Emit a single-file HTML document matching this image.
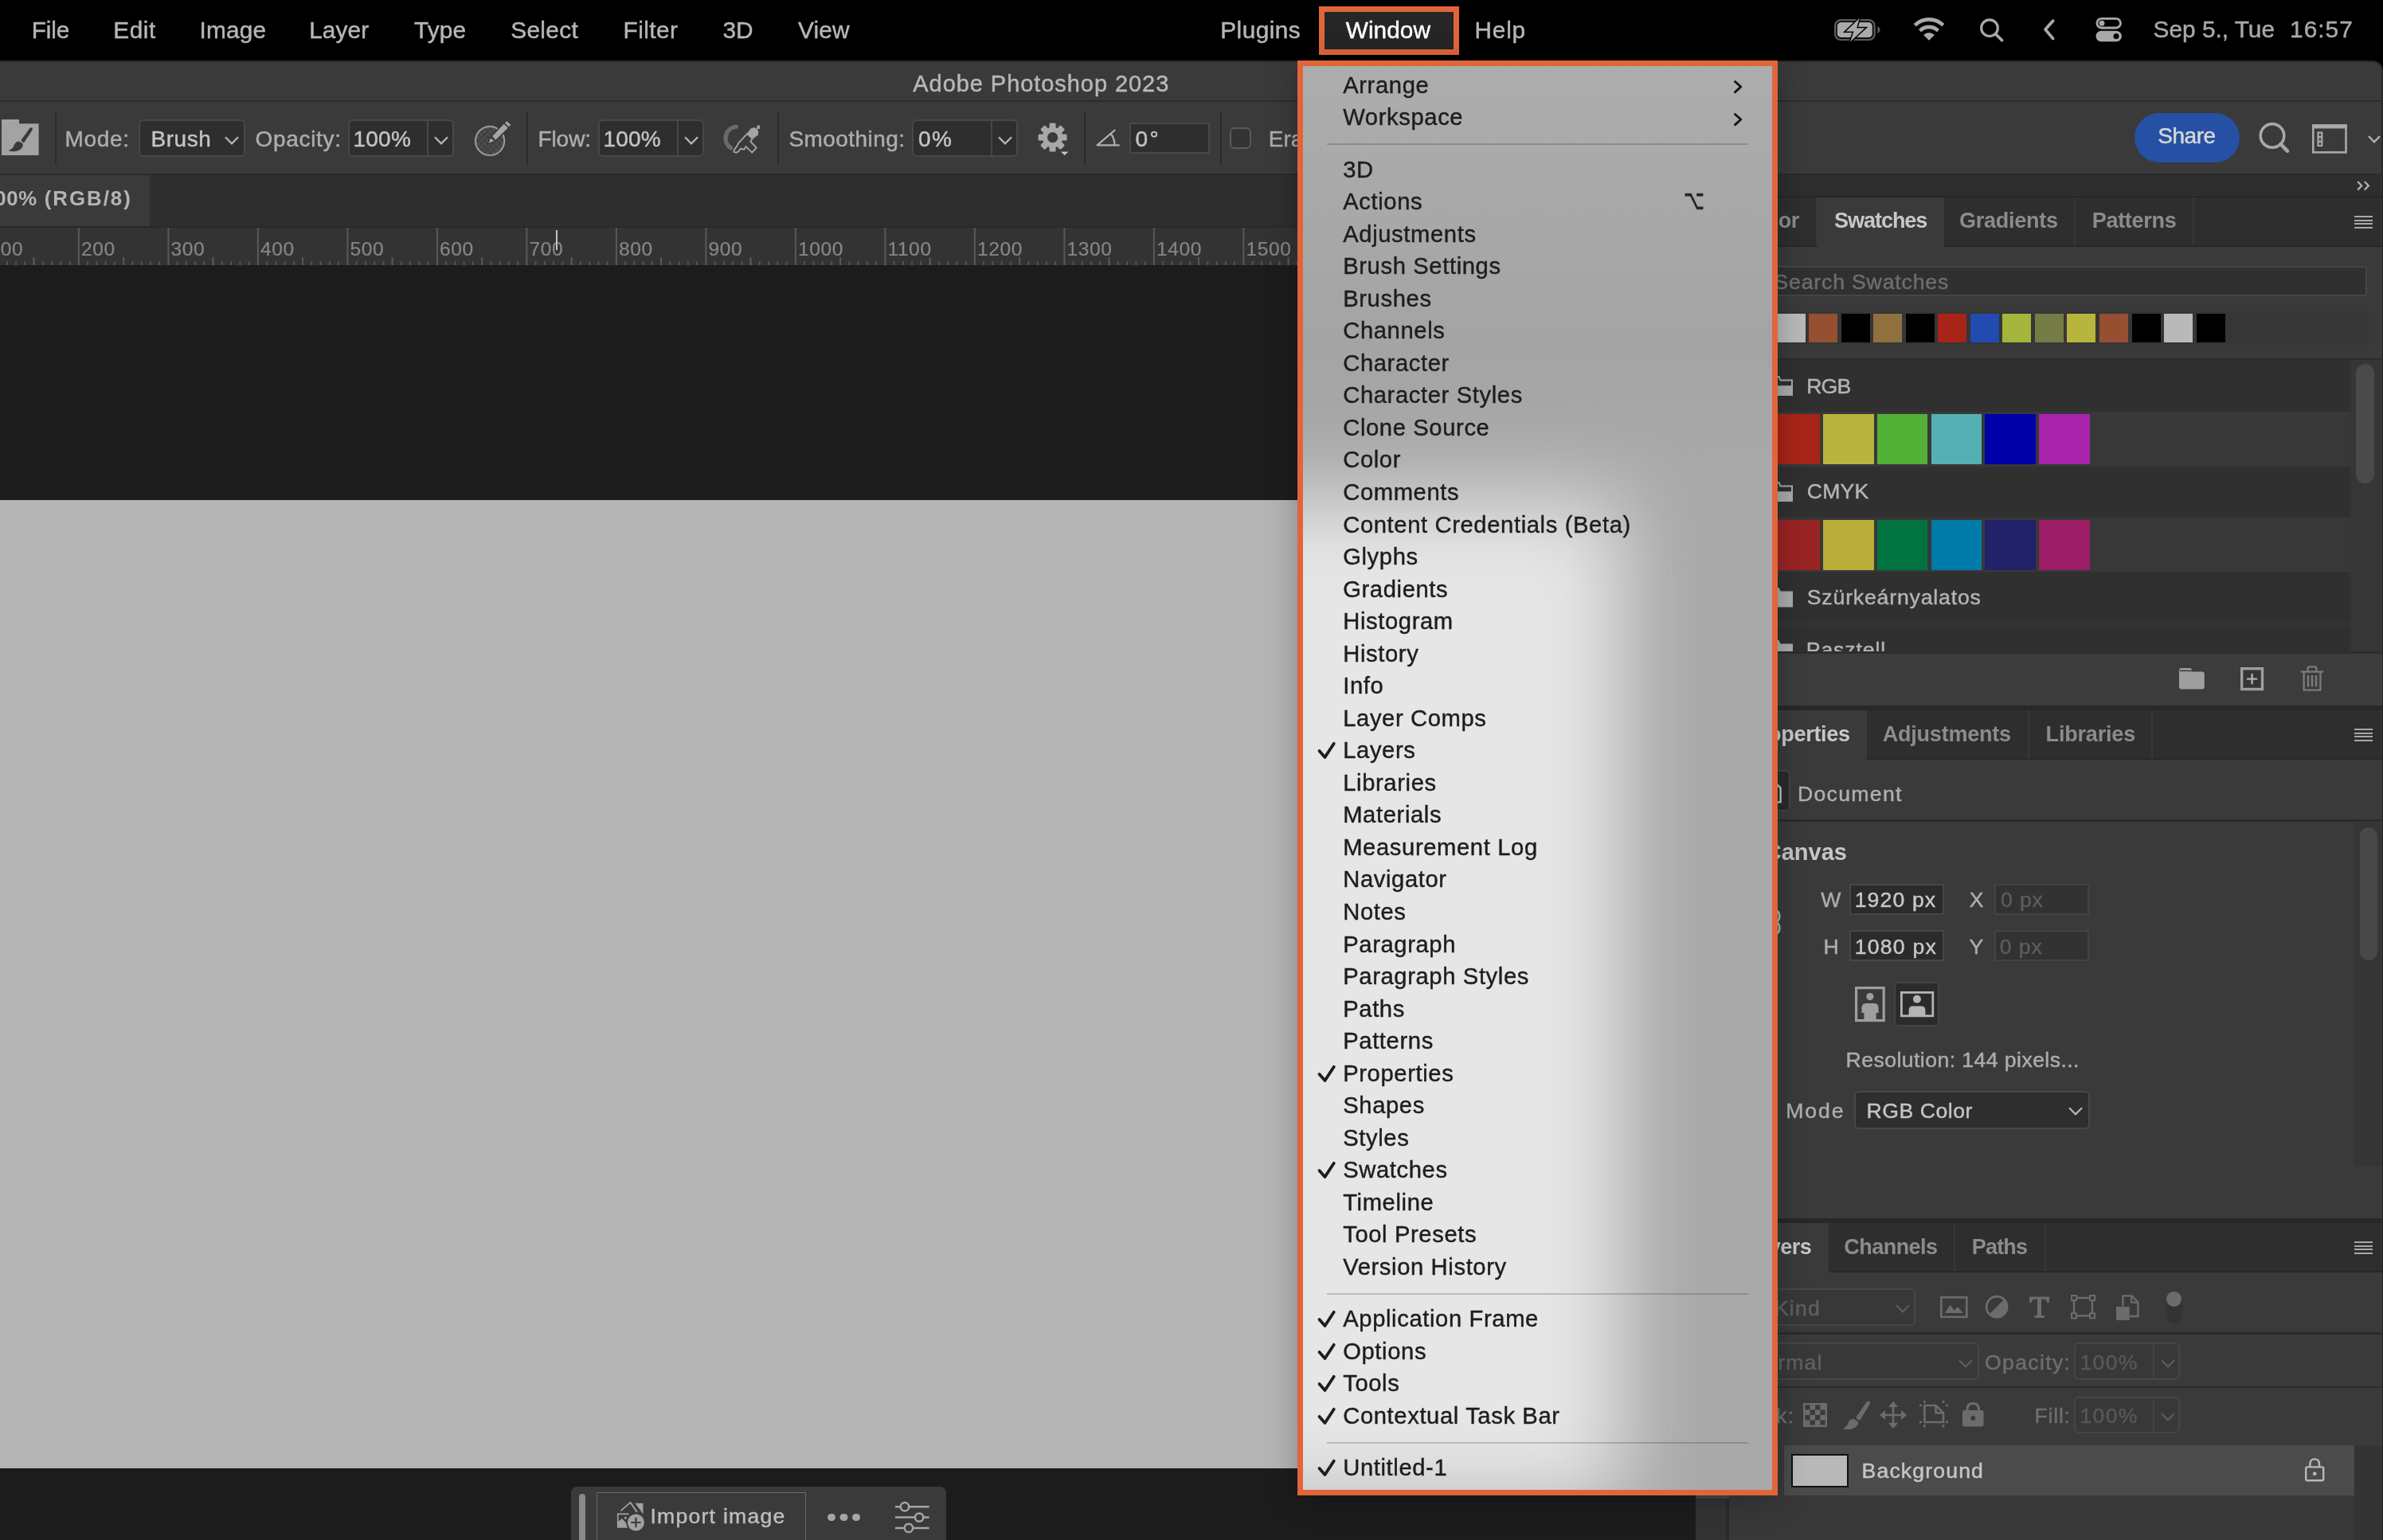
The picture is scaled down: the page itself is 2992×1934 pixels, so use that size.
<!DOCTYPE html>
<html lang="en">
<head>
<meta charset="utf-8">
<title>Adobe Photoshop 2023 - Window menu</title>
<style>
*{box-sizing:border-box;margin:0;padding:0}
html,body{width:2992px;height:1934px;overflow:hidden;background:#000}
body{position:relative;font-family:"Liberation Sans",sans-serif;color:#b0b0b0}
#root{position:absolute;left:0;top:0;width:2992px;height:1934px;will-change:transform}
.a{position:absolute}
.t{position:absolute;white-space:nowrap;line-height:1;font-size:29px}
.t{-webkit-text-stroke:.45px}
.b{font-weight:bold;-webkit-text-stroke:0}
svg{position:absolute;overflow:visible}
.sep{position:absolute;width:2px;top:140px;height:67px;background:#2b2b2b}
.box{position:absolute;background:#2e2e2e;border:2px solid #484848;border-radius:6px}
.mb{top:22px;font-size:29.8px;color:#b6b6b6}
.ob{top:159px;font-size:28px;color:#adadad}
.ov{top:159px;font-size:28px;color:#c4c4c4}
.pt{font-size:27px}
.ham{width:23px;height:16px;background:linear-gradient(#a8a8a8 0 2px,transparent 2px 4.6px,#a8a8a8 4.6px 6.6px,transparent 6.6px 9.3px,#a8a8a8 9.3px 11.3px,transparent 11.3px 14px,#a8a8a8 14px 16px)}
.rs{top:394px;width:36px;height:36px}
.sw{width:63.5px;height:63.3px}
.sl{color:#b4b4b4;font-size:26.6px}
.pl{color:#adadad;font-size:26.6px}
.fb{width:119px;height:39px;background:#2b2b2b;border:2px solid #474747}
.fd{background:#323232;border-color:#434343}
.dbx{background:#383838;border:2px solid #464646;border-radius:6px}
.mi{left:50.2px;font-size:29.2px;color:#1d1d1d;letter-spacing:.62px;-webkit-text-stroke:.42px}
.msep{left:30px;width:529px;height:2px;background:rgba(0,0,0,.17)}
.ck{fill:none;stroke:#1d1d1d;stroke-width:3.8;stroke-linecap:round;stroke-linejoin:round}
.chev{fill:none;stroke:#161616;stroke-width:3;stroke-linecap:round;stroke-linejoin:round}
.rl{top:301px;font-size:24.6px;color:#868686;letter-spacing:.6px;-webkit-text-stroke:.2px;margin-left:-1px}
.dchev{fill:none;stroke:#b4b4b4;stroke-width:2.3}
.dim{stroke:#5c5c5c}
</style>
</head>
<body>
<div id="root">
<!-- ================= application frame ================= -->
<div class="a" id="titlebar" style="left:0;top:76px;width:2992px;height:52px;background:#3a3a3a;border-top:2.6px solid #292929;border-right:2.4px solid #292929;border-bottom:2px solid #2b2b2b;border-top-right-radius:13px"></div>
<div class="a" id="optbar" style="left:0;top:128px;width:2991px;height:92px;background:#3a3a3a;border-bottom:2px solid #2b2b2b"></div>
<div class="a" id="tabbar" style="left:0;top:220px;width:2130px;height:64px;background:#2e2e2e"></div>
<div class="a" id="doctab" style="left:0;top:220px;width:188px;height:64px;background:#3a3a3a"></div>
<div class="a" id="ruler" style="left:0;top:284px;width:2130px;height:49px;background:#333;border-top:2px solid #292929"></div>
<div class="a" id="work" style="left:0;top:333px;width:2130px;height:1601px;background:#1c1c1c"></div>
<div class="a" id="canvas" style="left:0;top:628px;width:2037px;height:1216px;background:#b4b4b4"></div>
<div class="a" id="vscroll" style="left:2129px;top:220px;width:38px;height:1714px;background:#333"></div>
<div class="a" id="rightcol" style="left:2167px;top:220px;width:824px;height:1714px;background:#383838;border-left:4px solid #2a2a2a"></div>

<div class="a" style="left:2989.6px;top:100px;width:2.4px;height:1834px;background:#292929"></div>
<div class="a" style="left:2129px;top:1877px;width:104px;height:5px;background:#444"></div>
<!-- ================= mac menu bar ================= -->
<div class="a" id="menubar" style="left:0;top:0;width:2992px;height:76px;background:#000"></div>
<span class="t mb" id="m1" style="left:39.7px;top:22.5px;letter-spacing:-0.15px">File</span>
<span class="t mb" id="m2" style="left:142.3px;top:22.5px;letter-spacing:0.51px">Edit</span>
<span class="t mb" id="m3" style="left:250.5px;top:22.5px;letter-spacing:0.21px">Image</span>
<span class="t mb" id="m4" style="left:388.2px;top:22.5px;letter-spacing:0.10px">Layer</span>
<span class="t mb" id="m5" style="left:519.9px;top:22.5px;letter-spacing:0.22px">Type</span>
<span class="t mb" id="m6" style="left:641.3px;top:22.5px;letter-spacing:0.31px">Select</span>
<span class="t mb" id="m7" style="left:782.5px;top:22.5px;letter-spacing:0.44px">Filter</span>
<span class="t mb" id="m8" style="left:907.4px;top:22.5px;letter-spacing:-0.07px">3D</span>
<span class="t mb" id="m9" style="left:1002.0px;top:22.5px;letter-spacing:0.16px">View</span>
<span class="t mb" id="m10" style="left:1532.3px;top:22.5px;letter-spacing:0.45px">Plugins</span>
<div class="a" id="winhl" style="left:1656px;top:8.3px;width:176px;height:60.6px;background:#262626;border:7px solid #e0663a"></div>
<span class="t mb" id="m11" style="left:1689.7px;color:#fff;top:22.5px;letter-spacing:0.07px">Window</span>
<span class="t mb" id="m12" style="left:1851.6px;top:22.5px;letter-spacing:0.76px">Help</span>
<span class="t mb" id="m13" style="color:#a8a8a8;left:2703.6px;top:21.6px;">Sep 5., Tue</span>
<span class="t mb" id="m14" style="color:#a8a8a8;left:2875.1px;top:21.6px;letter-spacing:1.03px">16:57</span>

<!-- ================= title ================= -->
<span class="t" id="title" style="left:1146.3px;top:90.9px;font-size:29px;color:#b8b8b8;letter-spacing:0.94px">Adobe Photoshop 2023</span>

<!-- ================= options bar ================= -->
<div class="sep" style="left:69px"></div>
<span class="t ob" id="o1" style="left:81.5px;top:160.7px;letter-spacing:0.66px">Mode:</span>
<div class="box" style="left:174px;top:150px;width:134px;height:47px"></div>
<span class="t ov" id="o2" style="left:189.4px;top:160.7px;letter-spacing:0.56px">Brush</span>
<span class="t ob" id="o3" style="left:320.5px;top:160.7px;letter-spacing:0.68px">Opacity:</span>
<div class="box" style="left:437px;top:150px;width:133px;height:47px"></div>
<div class="a" style="left:536px;top:152px;width:2px;height:43px;background:#484848"></div>
<span class="t ov" id="o4" style="left:443.6px;top:160.7px;letter-spacing:0.19px">100%</span>
<div class="sep" style="left:661px"></div>
<span class="t ob" id="o5" style="left:675.4px;top:160.7px;letter-spacing:-0.05px">Flow:</span>
<div class="box" style="left:751px;top:150px;width:133px;height:47px"></div>
<div class="a" style="left:850px;top:152px;width:2px;height:43px;background:#484848"></div>
<span class="t ov" id="o6" style="left:757.6px;top:160.7px;letter-spacing:0.16px">100%</span>
<div class="sep" style="left:976px"></div>
<span class="t ob" id="o7" style="left:990.5px;top:160.7px;letter-spacing:0.43px">Smoothing:</span>
<div class="box" style="left:1145px;top:150px;width:133px;height:47px"></div>
<div class="a" style="left:1244px;top:152px;width:2px;height:43px;background:#484848"></div>
<span class="t ov" id="o8" style="left:1152.9px;top:160.7px;letter-spacing:1.53px">0%</span>
<div class="sep" style="left:1361px"></div>
<div class="box" style="left:1418px;top:154px;width:101px;height:39px;border-radius:0"></div>
<span class="t ov" id="o9" style="left:1425.6px;top:160.7px;letter-spacing:2.33px">0°</span>
<div class="sep" style="left:1532px"></div>
<div class="box" style="left:1544px;top:160px;width:27px;height:27px;background:#333;border-color:#5a5a5a"></div>
<span class="t ob" id="o10" style="left:1592.8px;top:160.7px">Erase to History</span>
<div class="a" id="share" style="left:2680px;top:142px;width:132px;height:62px;border-radius:31px;background:#2550a3"></div>
<span class="t" id="o11" style="left:2709.2px;top:157.1px;font-size:28px;color:#d8d8d8;letter-spacing:-0.46px">Share</span>

<!-- ================= document tab + ruler ================= -->
<span class="t b" id="dt1" style="left:-187.9px;top:237.3px;font-size:25.8px;color:#b4b4b4;letter-spacing:0.60px">Untitled-1 @ 100%</span>
<span class="t b" id="dt2" style="left:55.7px;top:237.3px;font-size:25.8px;color:#b4b4b4;letter-spacing:2.01px">(RGB/8)</span>

<!-- ================= right column ================= -->
<div class="a" style="left:2171px;top:220px;width:820px;height:28px;background:#2e2e2e;border-bottom:2px solid #262626"></div>
<!-- swatches panel -->
<div class="a" style="left:2171px;top:248px;width:820px;height:62px;background:#2e2e2e;border-bottom:2px solid #272727"></div>
<div class="a" style="left:2171px;top:248px;width:111px;height:60px;background:#2e2e2e;border-right:2px solid #383838"></div>
<div class="a" style="left:2282px;top:248px;width:159px;height:64px;background:#3a3a3a"></div>
<div class="a" style="left:2441px;top:248px;width:165px;height:60px;border-right:2px solid #383838"></div>
<div class="a" style="left:2606px;top:248px;width:149px;height:60px;border-right:2px solid #383838"></div>
<span class="t b pt" id="p0" style="left:2190.8px;top:263.9px;color:#8c8c8c;letter-spacing:-0.50px">Color</span>
<span class="t b pt" id="p1" style="left:2303.0px;top:263.9px;color:#c8c8c8;letter-spacing:-1.03px">Swatches</span>
<span class="t b pt" id="p2" style="left:2459.9px;top:263.9px;color:#8c8c8c;letter-spacing:-0.25px">Gradients</span>
<span class="t b pt" id="p3" style="left:2626.7px;top:263.9px;color:#8c8c8c;letter-spacing:-0.29px">Patterns</span>
<div class="a ham" style="left:2956px;top:271px"></div>
<div class="a" style="left:2171px;top:310px;width:820px;height:140px;background:#3a3a3a"></div>
<div class="a" style="left:2200px;top:334px;width:772px;height:38px;background:#303030;border:2px solid #454545;border-radius:3px"></div>
<span class="t" id="ss" style="left:2227.5px;top:340.6px;font-size:26.6px;color:#6e6e6e;letter-spacing:0.84px">Search Swatches</span>
<div class="a" style="left:2200px;top:391px;width:774px;height:42px;background:#363636"></div>
<div class="a rs" style="left:2231px;background:#b9b9b9"></div>
<div class="a rs" style="left:2271px;background:#964f30"></div>
<div class="a rs" style="left:2312px;background:#000"></div>
<div class="a rs" style="left:2352px;background:#90703f"></div>
<div class="a rs" style="left:2393px;background:#000"></div>
<div class="a rs" style="left:2433px;background:#a82418"></div>
<div class="a rs" style="left:2474px;background:#214bae"></div>
<div class="a rs" style="left:2514px;background:#a4b43c"></div>
<div class="a rs" style="left:2555px;background:#747c44"></div>
<div class="a rs" style="left:2595px;background:#b8b53e"></div>
<div class="a rs" style="left:2636px;background:#964f30"></div>
<div class="a rs" style="left:2677px;background:#000"></div>
<div class="a rs" style="left:2717px;background:#b9b9b9"></div>
<div class="a rs" style="left:2758px;background:#000"></div>
<div class="a" style="left:2171px;top:450px;width:820px;height:368px;background:#363636;border-top:2px solid #2c2c2c"></div>
<div class="a" style="left:2171px;top:452px;width:780px;height:366px;background:#303030"></div>
<div class="a" style="left:2171px;top:517px;width:780px;height:69px;background:#383838"></div>
<div class="a" style="left:2171px;top:650px;width:780px;height:68px;background:#383838"></div>
<div class="a" style="left:2171px;top:780px;width:780px;height:6px;background:#333"></div>
<span class="t sl" id="s1" style="left:2268.2px;top:471.5px;letter-spacing:-0.85px">RGB</span>
<span class="t sl" id="s2" style="left:2268.8px;top:604.1px;letter-spacing:0.17px">CMYK</span>
<span class="t sl" id="s3" style="left:2268.8px;top:737.3px;letter-spacing:0.84px">Szürkeárnyalatos</span>
<span class="t sl" id="s4" style="left:2267.8px;top:802.9px;clip-path:inset(0 0 11.5px 0);letter-spacing:0.88px">Pasztell</span>
<div class="a sw" style="left:2221.2px;top:520px;background:#a82418"></div>
<div class="a sw" style="left:2289.0px;top:520px;background:#b8b53e"></div>
<div class="a sw" style="left:2356.8px;top:520px;background:#52b036"></div>
<div class="a sw" style="left:2424.6px;top:520px;background:#55b0b4"></div>
<div class="a sw" style="left:2492.4px;top:520px;background:#0000a8"></div>
<div class="a sw" style="left:2560.2px;top:520px;background:#a823ac"></div>
<div class="a sw" style="left:2221.2px;top:653px;background:#9a2424"></div>
<div class="a sw" style="left:2289.0px;top:653px;background:#b8ad38"></div>
<div class="a sw" style="left:2356.8px;top:653px;background:#007340"></div>
<div class="a sw" style="left:2424.6px;top:653px;background:#007aa8"></div>
<div class="a sw" style="left:2492.4px;top:653px;background:#21226a"></div>
<div class="a sw" style="left:2560.2px;top:653px;background:#9c1e66"></div>
<div class="a" style="left:2958px;top:457px;width:23px;height:150px;border-radius:12px;background:#4a4a4a"></div>
<div class="a" style="left:2171px;top:817.6px;width:820px;height:68px;background:#3c3c3c;border-top:3.6px solid #2e2e2e"></div>
<div class="a" style="left:2171px;top:886px;width:820px;height:6px;background:#282828"></div>
<!-- properties panel -->
<div class="a" style="left:2171px;top:892px;width:820px;height:62px;background:#2e2e2e;border-bottom:2px solid #272727"></div>
<div class="a" style="left:2171px;top:892px;width:173px;height:64px;background:#3a3a3a"></div>
<div class="a" style="left:2344px;top:892px;width:204px;height:60px;border-right:2px solid #383838"></div>
<div class="a" style="left:2548px;top:892px;width:155px;height:60px;border-right:2px solid #383838"></div>
<span class="t b pt" id="p4" style="left:2192.2px;top:908.7px;color:#c8c8c8;letter-spacing:-0.30px">Properties</span>
<span class="t b pt" id="p5" style="left:2363.8px;top:908.7px;color:#8c8c8c;letter-spacing:-0.23px">Adjustments</span>
<span class="t b pt" id="p6" style="left:2568.6px;top:908.7px;color:#8c8c8c;letter-spacing:-0.18px">Libraries</span>
<div class="a ham" style="left:2956px;top:915px"></div>
<div class="a" style="left:2171px;top:954px;width:820px;height:576px;background:#3a3a3a"></div>
<div class="a" style="left:2200px;top:967px;width:48px;height:52px;background:#2b2b2b;border:2px solid #444;border-radius:6px"></div>
<span class="t" id="d1" style="font-size:26.6px;left:2256.9px;top:984.4px;color:#b0b0b0;letter-spacing:1.33px">Document</span>
<div class="a" style="left:2171px;top:1029px;width:820px;height:3px;background:#2b2b2b"></div>
<div class="a" style="left:2956px;top:1033px;width:35px;height:431px;background:#353535"></div>
<div class="a" style="left:2963px;top:1039px;width:22px;height:167px;border-radius:11px;background:#484848"></div>
<span class="t b" id="d2" style="left:2215.8px;top:1056.4px;font-size:29px;color:#c6c6c6">Canvas</span>
<span class="t pl" id="d3" style="left:2286.3px;top:1117.4px">W</span>
<span class="t pl" id="d4" style="left:2289.6px;top:1175.6px">H</span>
<span class="t pl" id="d5" style="left:2472.8px;top:1117.4px">X</span>
<span class="t pl" id="d6" style="left:2472.5px;top:1175.6px">Y</span>
<div class="a fb" style="left:2322px;top:1110px"></div>
<div class="a fb" style="left:2322px;top:1168px"></div>
<div class="a fb fd" style="left:2504px;top:1110px"></div>
<div class="a fb fd" style="left:2504px;top:1168px"></div>
<span class="t" id="d7" style="font-size:26.6px;left:2328.7px;top:1117.4px;color:#c8c8c8;letter-spacing:1.13px">1920 px</span>
<span class="t" id="d8" style="font-size:26.6px;left:2328.7px;top:1175.6px;color:#c8c8c8;letter-spacing:1.24px">1080 px</span>
<span class="t" id="d9" style="font-size:26.6px;left:2512.1px;top:1117.4px;color:#5c5c5c;letter-spacing:0.84px">0 px</span>
<span class="t" id="d10" style="font-size:26.6px;left:2510.7px;top:1175.6px;color:#5c5c5c;letter-spacing:0.98px">0 px</span>
<div class="a" style="left:2378px;top:1233px;width:57px;height:56px;background:#2b2b2b;border:2px solid #444;border-radius:5px"></div>
<span class="t" id="d11" style="font-size:26.6px;left:2317.6px;top:1318.4px;color:#adadad;letter-spacing:0.44px">Resolution: 144 pixels...</span>
<span class="t" id="d12" style="font-size:26.6px;left:2242.2px;top:1382.1px;color:#adadad;letter-spacing:1.92px">Mode</span>
<div class="box" style="left:2328px;top:1370px;width:296px;height:48px"></div>
<span class="t" id="d13" style="font-size:26.6px;left:2343.6px;top:1382.1px;color:#c4c4c4;letter-spacing:0.52px">RGB Color</span>
<div class="a" style="left:2171px;top:1530px;width:820px;height:6px;background:#282828"></div>
<!-- layers panel -->
<div class="a" style="left:2171px;top:1536px;width:820px;height:62px;background:#2e2e2e;border-bottom:2px solid #272727"></div>
<div class="a" style="left:2171px;top:1536px;width:125px;height:64px;background:#3a3a3a"></div>
<div class="a" style="left:2296px;top:1536px;width:159px;height:60px;border-right:2px solid #383838"></div>
<div class="a" style="left:2455px;top:1536px;width:114px;height:60px;border-right:2px solid #383838"></div>
<span class="t b pt" id="p7" style="left:2190.3px;top:1552.7px;color:#c8c8c8;letter-spacing:-0.50px">Layers</span>
<span class="t b pt" id="p8" style="left:2315.3px;top:1552.7px;color:#8c8c8c;letter-spacing:-0.54px">Channels</span>
<span class="t b pt" id="p9" style="left:2475.8px;top:1552.7px;color:#8c8c8c;letter-spacing:-0.83px">Paths</span>
<div class="a ham" style="left:2956px;top:1559px"></div>
<div class="a" style="left:2171px;top:1598px;width:820px;height:217px;background:#3a3a3a"></div>
<div class="a" style="left:2171px;top:1673px;width:820px;height:2.5px;background:#2c2c2c"></div>
<div class="a" style="left:2171px;top:1740.5px;width:820px;height:2.5px;background:#2c2c2c"></div>
<div class="a dbx" style="left:2190px;top:1618px;width:215px;height:47px"></div>
<span class="t" id="l1" style="font-size:26.6px;left:2227.9px;top:1630.1px;color:#606060;letter-spacing:1.20px">Kind</span>
<div class="a dbx" style="left:2190px;top:1686px;width:295px;height:47px"></div>
<span class="t" id="l2" style="font-size:26.6px;left:2195.8px;top:1698.1px;color:#606060;letter-spacing:1.20px">Normal</span>
<span class="t" id="l3" style="font-size:26.6px;left:2492.1px;top:1698.1px;color:#6e6e6e;letter-spacing:1.33px">Opacity:</span>
<div class="a dbx" style="left:2604px;top:1686px;width:133px;height:47px"></div>
<div class="a" style="left:2703px;top:1688px;width:2px;height:43px;background:#414141"></div>
<span class="t" id="l4" style="font-size:26.6px;left:2611.6px;top:1698.1px;color:#585858;letter-spacing:1.24px">100%</span>
<span class="t" id="l5" style="font-size:26.6px;left:2183.5px;top:1764.9px;color:#6e6e6e;letter-spacing:1.20px">Lock:</span>
<span class="t" id="l6" style="font-size:26.6px;left:2554.5px;top:1764.9px;color:#6e6e6e;letter-spacing:0.78px">Fill:</span>
<div class="a dbx" style="left:2604px;top:1754px;width:133px;height:46px"></div>
<div class="a" style="left:2703px;top:1756px;width:2px;height:42px;background:#414141"></div>
<span class="t" id="l7" style="font-size:26.6px;left:2611.6px;top:1764.9px;color:#585858;letter-spacing:1.24px">100%</span>
<div class="a" style="left:2171px;top:1815px;width:820px;height:119px;background:#383838"></div>
<div class="a" style="left:2956px;top:1815px;width:35px;height:119px;background:#343434"></div>
<div class="a" style="left:2240px;top:1815px;width:716px;height:63px;background:#4b4b4b"></div>
<div class="a" style="left:2249px;top:1826px;width:72px;height:42px;background:#b9b9b9;border:2px solid #111"></div>
<span class="t" id="l8" style="font-size:26.6px;left:2337.6px;top:1833.6px;color:#c6c6c6;letter-spacing:1.15px">Background</span>
<!-- ================= ruler ================= -->
<div class="a" id="rticks" style="left:0;top:286px;width:2130px;height:47px;background:repeating-linear-gradient(90deg,#585858 0 1.6px,transparent 1.6px 112.5px) 97.9px 0/112.5px 47px repeat-x,repeating-linear-gradient(90deg,#585858 0 1.6px,transparent 1.6px 112.5px) 41.6px 37px/112.5px 10px repeat-x,repeating-linear-gradient(90deg,#555 0 1.5px,transparent 1.5px 11.25px) 7.95px 42px/11.25px 5px repeat-x"></div>
<span class="t rl" style="left:-12.6px">100</span>
<span class="t rl" style="left:102.9px">200</span>
<span class="t rl" style="left:215.4px">300</span>
<span class="t rl" style="left:327.9px">400</span>
<span class="t rl" style="left:440.4px">500</span>
<span class="t rl" style="left:552.9px">600</span>
<span class="t rl" style="left:665.4px">700</span>
<span class="t rl" style="left:777.9px">800</span>
<span class="t rl" style="left:890.4px">900</span>
<span class="t rl" style="left:1002.9px">1000</span>
<span class="t rl" style="left:1115.4px">1100</span>
<span class="t rl" style="left:1227.9px">1200</span>
<span class="t rl" style="left:1340.4px">1300</span>
<span class="t rl" style="left:1452.9px">1400</span>
<span class="t rl" style="left:1565.4px">1500</span>
<div class="a" style="left:698px;top:289px;width:2px;height:25px;background:#c4c4c4"></div>
<!-- ================= contextual task bar ================= -->
<div class="a" id="ctb" style="left:717px;top:1867px;width:471px;height:80px;background:#3a3a3a;border-radius:8px"></div>
<div class="a" style="left:727px;top:1876px;width:8px;height:70px;background:#8a8a8a;border-radius:4px"></div>
<div class="a" style="left:749px;top:1874px;width:263px;height:70px;border:1.5px solid #6a6a6a"></div>
<span class="t" id="c1" style="left:816.4px;top:1890.9px;font-size:26.6px;color:#bdbdbd;letter-spacing:1.25px">Import image</span>
<div class="a" style="left:1039.4px;top:1900.9px;width:9.4px;height:9.4px;border-radius:50%;background:#a5a5a5;box-shadow:15.5px 0 0 #a5a5a5,31px 0 0 #a5a5a5"></div>
<!-- ================= icons ================= -->
<!-- mac status icons -->
<svg id="i-batt" style="left:2302px;top:23px" width="60" height="30" viewBox="0 0 60 30"><rect x="2.2" y="2.3" width="49.4" height="24.6" rx="7" fill="none" stroke="#5a5a5a" stroke-width="2.4"/><rect x="4.8" y="5.1" width="44" height="18.8" rx="4.5" fill="#a9a9a9"/><path d="M55.4 10.2 q3.2 1.4 3.2 4.4 t-3.2 4.4z" fill="#5a5a5a"/><path d="M32.5 0 L15.5 16.6 H25.5 L21 29.5 L39.5 12.2 H29.2 Z" fill="#a9a9a9" stroke="#000" stroke-width="3" paint-order="stroke"/></svg>
<svg id="i-wifi" style="left:2402px;top:22px" width="40" height="30" viewBox="0 0 40 30"><g fill="none" stroke="#a9a9a9" stroke-width="4.6"><path d="M2.2 9.6 A25.5 25.5 0 0 1 37.8 9.6"/><path d="M8.6 16.6 A16.2 16.2 0 0 1 31.4 16.6"/></g><path d="M20 28.8 L13.2 21.9 A9.6 9.6 0 0 1 26.8 21.9 Z" fill="#a9a9a9"/></svg>
<svg id="i-msearch" style="left:2485px;top:22px" width="32" height="32" viewBox="0 0 32 32"><circle cx="13" cy="13.2" r="10.3" fill="none" stroke="#a9a9a9" stroke-width="3.2"/><path d="M20.6 20.8 L28.6 28.6" stroke="#a9a9a9" stroke-width="3.6" stroke-linecap="round"/></svg>
<svg id="i-mchev" style="left:2565px;top:24px" width="16" height="27" viewBox="0 0 16 27"><path d="M12.6 2.2 L3 12.9 L12.6 24.4" fill="none" stroke="#a9a9a9" stroke-width="3.8" stroke-linecap="round" stroke-linejoin="round"/></svg>
<svg id="i-cc" style="left:2631px;top:21px" width="34" height="32" viewBox="0 0 34 32"><rect x="1.9" y="2.4" width="29.6" height="11.6" rx="5.8" fill="none" stroke="#a9a9a9" stroke-width="2.8"/><circle cx="8" cy="8.2" r="3.4" fill="#a9a9a9"/><rect x="0.5" y="17.8" width="32.4" height="13.4" rx="6.7" fill="#a9a9a9"/><circle cx="26" cy="24.5" r="3.5" fill="#000"/></svg>
<!-- options bar icons -->
<svg id="i-preset" style="left:2px;top:150px" width="48" height="46" viewBox="0 0 48 46"><path d="M0 0 H22 V5.2 H46.6 V45 H0 Z" fill="#a3a3a3"/><path d="M38.6 10.6 Q36 9.6 34.6 12 L24.2 26.6 L28 29.6 L38 14.2 Q39.6 12 38.6 10.6 Z M23 28 Q17.6 27 15.6 32.6 Q14.6 37 8.6 39.2 Q16.6 41.6 22.2 38.6 Q27.2 35.6 26.8 30.8 Z" fill="#3a3a3a"/></svg>
<svg class="dchev" style="left:282px;top:171px" width="18" height="11" viewBox="0 0 18 11"><path d="M1 1.2 L9 9.4 L17 1.2"/></svg>
<svg class="dchev" style="left:545px;top:171px" width="18" height="11" viewBox="0 0 18 11"><path d="M1 1.2 L9 9.4 L17 1.2"/></svg>
<svg class="dchev" style="left:859px;top:171px" width="18" height="11" viewBox="0 0 18 11"><path d="M1 1.2 L9 9.4 L17 1.2"/></svg>
<svg class="dchev" style="left:1253px;top:171px" width="18" height="11" viewBox="0 0 18 11"><path d="M1 1.2 L9 9.4 L17 1.2"/></svg>
<svg id="i-press" style="left:594px;top:150px" width="50" height="48" viewBox="0 0 50 48"><defs><pattern id="chk" width="7.6" height="7.6" patternUnits="userSpaceOnUse" x="1" y="2"><rect width="7.6" height="7.6" fill="#3f3f3f"/><rect width="3.8" height="3.8" fill="#4d4d4d"/><rect x="3.8" y="3.8" width="3.8" height="3.8" fill="#4d4d4d"/></pattern></defs><circle cx="21.1" cy="26.9" r="18.1" fill="url(#chk)" stroke="#979797" stroke-width="2.2"/><path d="M19.5 29.8 L22 23.6 L38.7 5.8 L42.4 2.2 L47.4 6.8 L43.8 10.5 L28.2 25.8 Z" fill="#3a3a3a" stroke="#3a3a3a" stroke-width="3.4" stroke-linejoin="round"/><path d="M19.5 29.8 L22 23.6 L26.4 26.9 Z M24.2 21.1 L38.7 5.8 L43.8 10.5 L28.2 25.8 Z M39.9 4.6 L42.4 2.2 L47.4 6.8 L45 9.3 Z" fill="#a6a6a6"/></svg>
<svg id="i-air" style="left:906px;top:154px" width="50" height="42" viewBox="0 0 50 42"><path d="M18.3 5.1 A14.6 14.6 0 0 0 11.6 31.8" fill="none" stroke="#6a6a6a" stroke-width="5.4" stroke-linecap="round"/><path d="M32.2 13.9 L21 25.8 L19 29.8 L15.8 34.4 Q14.4 36.6 16.4 37.2 L18.3 37.7 L20.7 36.6 L24.4 32.5 L28.1 33.9 L30.5 30.1 L38.3 37.6 L43.7 31.5 L36.2 23.7 L38.6 20.4" fill="none" stroke="#a4a4a4" stroke-width="1.9" stroke-linejoin="round"/><path d="M37.6 7.5 Q40.4 6.2 42.6 7.2 Q45.4 8.6 45.7 11.6 L45.4 15 L38.6 20.4 L33.2 15.6 L32.2 13.9 Z" fill="#a4a4a4" stroke="#a4a4a4" stroke-width="1.2" stroke-linejoin="round"/><rect x="44.3" y="3.5" width="3.7" height="4.4" fill="#a4a4a4"/></svg>
<svg id="i-gear" style="left:1303px;top:154px" width="40" height="42" viewBox="0 0 40 42"><g transform="translate(18.6 18.6)" fill="#a8a8a8"><circle r="12.8"/><rect x="-4" y="-18" width="8" height="36" rx="1.4" transform="rotate(0)"/><rect x="-4" y="-18" width="8" height="36" rx="1.4" transform="rotate(45)"/><rect x="-4" y="-18" width="8" height="36" rx="1.4" transform="rotate(90)"/><rect x="-4" y="-18" width="8" height="36" rx="1.4" transform="rotate(135)"/><circle r="6.6" fill="#3a3a3a"/></g><path d="M29 36.4 H38.4 L33.7 41 Z" fill="#c6c6c6"/></svg>
<svg id="i-angle" style="left:1375px;top:161px" width="32" height="23" viewBox="0 0 32 23"><path d="M25.2 2 L2.6 21.3 H30.6 M19.6 6.8 Q24.6 13.2 24.4 21.3" fill="none" stroke="#b0b0b0" stroke-width="2.3" stroke-linejoin="round"/></svg>
<svg id="i-osearch" style="left:2836px;top:153px" width="40" height="40" viewBox="0 0 40 40"><circle cx="17" cy="17.4" r="14.8" fill="none" stroke="#a8a8a8" stroke-width="3.6"/><path d="M27.6 28 L36 36.6" stroke="#a8a8a8" stroke-width="4.6" stroke-linecap="round"/></svg>
<svg id="i-ws" style="left:2903px;top:156px" width="44" height="37" viewBox="0 0 44 37"><rect x="1.3" y="1.3" width="41.2" height="34" fill="none" stroke="#a8a8a8" stroke-width="2.6"/><rect x="0" y="0" width="43.8" height="5.4" fill="#a8a8a8"/><path d="M6.4 9.4 h7 v18.6 h-7z" fill="#a8a8a8"/><path d="M8.6 11.8 h2.6 v3 h-2.6z M8.6 17.4 h2.6 v3 h-2.6z M8.6 23 h2.6 v3 h-2.6z" fill="#3a3a3a"/></svg>
<svg class="dchev" style="left:2973px;top:170px" width="16" height="10" viewBox="0 0 16 10"><path d="M1 1 L8 8.4 L15 1"/></svg>
<svg id="i-rr" style="left:2959px;top:227px" width="17" height="13" viewBox="0 0 17 13"><path d="M1.2 1 L6.2 6.2 L1.2 11.4 M9.8 1 L14.8 6.2 L9.8 11.4" fill="none" stroke="#b0b0b0" stroke-width="2.3"/></svg>
<!-- swatches panel icons -->
<svg class="fold" style="left:2222px;top:472px" width="30" height="25" viewBox="0 0 30 25"><path d="M1 24 V1 H11.5 L13.6 5.6 H28 V24 Z" fill="none" stroke="#aaa" stroke-width="2"/><rect x="0" y="12.2" width="29" height="12.4" rx="1.4" fill="#aaa"/></svg>
<svg class="fold" style="left:2222px;top:605px" width="30" height="25" viewBox="0 0 30 25"><path d="M1 24 V1 H11.5 L13.6 5.6 H28 V24 Z" fill="none" stroke="#aaa" stroke-width="2"/><rect x="0" y="12.2" width="29" height="12.4" rx="1.4" fill="#aaa"/></svg>
<svg class="fold" style="left:2222px;top:738px" width="30" height="25" viewBox="0 0 30 25"><path d="M0 0 H11.5 L13.6 4.4 H29 V24.6 H0 Z" fill="#aaa"/></svg>
<div class="a" style="left:2171px;top:784px;width:780px;height:34px;overflow:hidden"><svg class="fold" style="left:51px;top:20px" width="30" height="25" viewBox="0 0 30 25"><path d="M0 0 H11.5 L13.6 4.4 H29 V24.6 H0 Z" fill="#aaa"/></svg></div>
<svg id="i-ffold" style="left:2736px;top:839px" width="33" height="27" viewBox="0 0 33 27"><path d="M0 3 Q0 0 3 0 H13.4 Q16 0 16 3 V4.6 H28.8 Q31.8 4.6 31.8 7.6 V23.4 Q31.8 26.4 28.8 26.4 H3 Q0 26.4 0 23.4 Z" fill="#9e9e9e"/><rect x="1" y="2.6" width="15" height="1.6" fill="#3c3c3c"/></svg>
<svg id="i-fplus" style="left:2813px;top:838px" width="30" height="30" viewBox="0 0 30 30"><rect x="1.7" y="1.7" width="25.8" height="25.8" fill="#353535" stroke="#9e9e9e" stroke-width="3.4"/><path d="M14.6 8 V21.2 M8 14.6 H21.2" stroke="#b0b0b0" stroke-width="2.4"/></svg>
<svg id="i-ftrash" style="left:2888px;top:836px" width="30" height="33" viewBox="0 0 30 33"><path d="M0.6 7.6 H29.4 M4.6 7.6 V30.6 H25.4 V7.6 M9.6 7 V3.6 Q9.6 1.4 12 1.4 H18 Q20.4 1.4 20.4 3.6 V7" fill="none" stroke="#7a7a7a" stroke-width="2.4"/><path d="M10 12 V26.6 M15 12 V26.6 M20 12 V26.6" stroke="#7a7a7a" stroke-width="2.6"/></svg>
<!-- properties icons -->
<svg id="i-doc" style="left:2216px;top:982px" width="22" height="27" viewBox="0 0 22 27"><path d="M1.2 1.2 H13 L19.6 7.6 V25.4 H1.2 Z" fill="none" stroke="#c4c4c4" stroke-width="2.4"/></svg>
<svg id="i-link" style="left:2219px;top:1140px" width="18" height="36" viewBox="0 0 18 36"><g fill="none" stroke="#b0b0b0" stroke-width="2.6"><rect x="2" y="2.9" width="13.2" height="15.4" rx="6.4"/><rect x="2" y="17.7" width="13.2" height="15.4" rx="6.4"/></g></svg>
<svg id="i-port" style="left:2329px;top:1239px" width="39" height="45" viewBox="0 0 39 45"><rect x="1.6" y="1.6" width="34.6" height="41" fill="none" stroke="#9e9e9e" stroke-width="3.2"/><circle cx="18.9" cy="12.6" r="4.6" fill="#9e9e9e"/><path d="M8.4 27 Q8.4 21 14 21 H24 Q29.6 21 29.6 27 V33 H26.6 V42 H11.4 V33 H8.4 Z" fill="#9e9e9e"/></svg>
<svg id="i-land" style="left:2386px;top:1245px" width="43" height="33" viewBox="0 0 43 33"><rect x="1.4" y="1.4" width="39.4" height="29.4" fill="none" stroke="#b4b4b4" stroke-width="2.8"/><circle cx="20.9" cy="9.8" r="5" fill="#b4b4b4"/><path d="M10.6 30 V24 Q10.6 18.6 16 18.6 H26 Q31.4 18.6 31.4 24 V30 Z" fill="#b4b4b4"/></svg>
<svg class="dchev" style="left:2597px;top:1390px" width="18" height="11" viewBox="0 0 18 11"><path d="M1 1.2 L9 9.4 L17 1.2"/></svg>
<!-- layers icons -->
<svg class="dchev dim" style="left:2380px;top:1638px" width="18" height="11" viewBox="0 0 18 11"><path d="M1 1.2 L9 9.4 L17 1.2"/></svg>
<svg class="dchev dim" style="left:2459px;top:1707px" width="18" height="11" viewBox="0 0 18 11"><path d="M1 1.2 L9 9.4 L17 1.2"/></svg>
<svg class="dchev dim" style="left:2713px;top:1707px" width="18" height="11" viewBox="0 0 18 11"><path d="M1 1.2 L9 9.4 L17 1.2"/></svg>
<svg class="dchev dim" style="left:2713px;top:1774px" width="18" height="11" viewBox="0 0 18 11"><path d="M1 1.2 L9 9.4 L17 1.2"/></svg>
<svg id="i-fimg" style="left:2436px;top:1628px" width="36" height="28" viewBox="0 0 36 28"><rect x="1.3" y="1.3" width="32" height="24.6" fill="none" stroke="#6c6c6c" stroke-width="2.6"/><path d="M6 21 L12.6 10.6 L17.6 17.6 L22 13 L28.6 21 Z" fill="#6c6c6c"/></svg>
<svg id="i-fadj" style="left:2492px;top:1626px" width="30" height="30" viewBox="0 0 30 30"><circle cx="15.1" cy="15.2" r="13" fill="none" stroke="#6c6c6c" stroke-width="2.8"/><path d="M24.6 5.6 A13.4 13.4 0 0 1 5.6 24.6 Z" fill="#6c6c6c"/></svg>
<svg id="i-ftxt" style="left:2547px;top:1628px" width="28" height="28" viewBox="0 0 28 28"><path d="M1 0.4 H26 V8 H23.4 Q23 3.6 19 3.4 H16 V23 Q16 24.6 20 24.6 V27 H7 V24.6 Q11 24.6 11 23 V3.4 H8 Q4 3.6 3.6 8 H1 Z" fill="#6c6c6c"/></svg>
<svg id="i-fshape" style="left:2600px;top:1626px" width="32" height="31" viewBox="0 0 32 31"><rect x="4" y="4" width="23" height="22.4" fill="none" stroke="#6c6c6c" stroke-width="2.4"/><g fill="#3a3a3a" stroke="#6c6c6c" stroke-width="2"><rect x="1" y="1" width="6" height="6"/><rect x="24" y="1" width="6" height="6"/><rect x="1" y="23.4" width="6" height="6"/><rect x="24" y="23.4" width="6" height="6"/></g></svg>
<svg id="i-fsmart" style="left:2657px;top:1626px" width="30" height="33" viewBox="0 0 30 33"><path d="M8.4 14 V1.4 H19.6 L27.4 9.4 V27 H17" fill="none" stroke="#6c6c6c" stroke-width="2.4"/><path d="M19.2 1.4 V9.8 H27.4" fill="none" stroke="#6c6c6c" stroke-width="2"/><rect x="0" y="15" width="16.6" height="17" fill="#6c6c6c"/></svg>
<div class="a" style="left:2720px;top:1624px;width:20px;height:38px;border-radius:10px;background:#333"></div>
<div class="a" style="left:2720px;top:1622px;width:19px;height:19px;border-radius:50%;background:#6c6c6c"></div>
<svg id="i-lchk" style="left:2264px;top:1762px" width="30" height="30" viewBox="0 0 30 30"><rect x="1.2" y="1.2" width="27.6" height="27.6" fill="none" stroke="#6c6c6c" stroke-width="2.4"/><path d="M8.6 2.2 h6.4 v6.4 h-6.4 z M21.4 2.2 h6.4 v6.4 h-6.4 z M2.2 8.6 h6.4 v6.4 h-6.4 z M15.0 8.6 h6.4 v6.4 h-6.4 z M8.6 15.0 h6.4 v6.4 h-6.4 z M21.4 15.0 h6.4 v6.4 h-6.4 z M2.2 21.4 h6.4 v6.4 h-6.4 z M15.0 21.4 h6.4 v6.4 h-6.4 z" fill="#6c6c6c"/></svg>
<svg id="i-lbrush" style="left:2313px;top:1759px" width="36" height="37" viewBox="0 0 36 37"><path d="M34.6 0.6 Q31.6 0.4 29.6 3 L17 21.4 L22 25 L33.6 6 Q35.6 3 34.6 0.6 Z M15 23 Q9 22.6 7.4 28 Q6.4 32.6 0.4 35 Q10 38 16.6 33.4 Q21 30 19.8 26.4 Z" fill="#6c6c6c"/></svg>
<svg id="i-lmove" style="left:2360px;top:1760px" width="34" height="34" viewBox="0 0 34 34"><path d="M17 3 V31 M3 17 H31" stroke="#6c6c6c" stroke-width="2.6"/><path d="M17 0 L23 7 H11 Z M17 34 L23 27 H11 Z M0 17 L7 11 V23 Z M34 17 L27 11 V23 Z" fill="#6c6c6c"/></svg>
<svg id="i-lart" style="left:2410px;top:1759px" width="36" height="34" viewBox="0 0 36 34"><path d="M6.4 6 H20.6 L30 15.4 V27 H6.4 Z M20.6 6 V15.4 H30" fill="none" stroke="#6c6c6c" stroke-width="2.6"/><path d="M6.4 0 V3 M0 6 H3 M0 27 H3 M6.4 30 V33.4 M30 30 V33.4 M33 27 H36 M33 6 H36 M30 0 V3" stroke="#6c6c6c" stroke-width="2.6"/></svg>
<svg id="i-llock" style="left:2463px;top:1761px" width="29" height="31" viewBox="0 0 29 31"><path d="M7 11 V8.6 Q7 1.4 14.2 1.4 Q21.4 1.4 21.4 8.6 V11" fill="none" stroke="#6c6c6c" stroke-width="3"/><rect x="1" y="10" width="26.6" height="20.4" rx="2.6" fill="#6c6c6c"/><circle cx="14.3" cy="20" r="3" fill="#3a3a3a"/></svg>
<svg id="i-bglock" style="left:2894px;top:1831px" width="25" height="30" viewBox="0 0 25 30"><path d="M6.4 11 V8 Q6.4 1.4 12.2 1.4 Q18 1.4 18 8 V11" fill="none" stroke="#b8b8b8" stroke-width="2.4"/><rect x="1.2" y="11.4" width="22" height="16.8" rx="1.6" fill="none" stroke="#b8b8b8" stroke-width="2.4"/><circle cx="12.2" cy="19.8" r="2.4" fill="#b8b8b8"/></svg>
<!-- task bar icons -->
<svg id="i-import" style="left:774px;top:1886px" width="36" height="38" viewBox="0 0 36 38"><rect x="0.9" y="14.4" width="14.6" height="18.3" fill="#a0a0a0"/><path d="M2.6 16.2 H16 V30.6 L6.9 21.1 L2.6 24.7 Z" fill="#3a3a3a"/><circle cx="11.4" cy="20.2" r="1.5" fill="#a0a0a0"/><path d="M6 10.9 L17.5 0.9 L25.5 12.4" fill="none" stroke="#a0a0a0" stroke-width="1.9" stroke-linejoin="round" stroke-linecap="round"/><path d="M23.3 1.8 H33.5 V15.6 Z" fill="#a0a0a0"/><circle cx="24.4" cy="26" r="12.2" fill="#3a3a3a"/><circle cx="24.4" cy="26" r="10.5" fill="#a0a0a0"/><path d="M24.4 19.8 V32.2 M18.2 26 H30.6" stroke="#3a3a3a" stroke-width="2.2"/></svg>
<svg id="i-sliders" style="left:1123px;top:1884px" width="45" height="42" viewBox="0 0 45 42"><g fill="none" stroke="#a5a5a5" stroke-width="2.5"><path d="M1 8.2 H7.6 M18.4 8.2 H43.6 M1 21.6 H25.6 M36.6 21.6 H43.6 M1 34.9 H12.4 M23.4 34.9 H43.6"/><circle cx="13" cy="8.2" r="5.2"/><circle cx="31.1" cy="21.6" r="5.2"/><circle cx="17.9" cy="34.9" r="5.2"/></g></svg>
<!--RIGHT-->
<!-- ================= Window dropdown menu ================= -->
<div class="a" id="menu" style="left:1629px;top:76px;width:603px;height:1802px;border:7px solid #e0663a;background:#a9a9a9;overflow:hidden;box-shadow:0 4px 36px rgba(0,0,0,.26)">
<div class="a" style="left:0;top:0;width:589px;height:500px;background:linear-gradient(#adadad,#a4a4a4 70%,rgba(164,164,164,0))"></div>
<div class="a" style="left:-200px;top:545px;width:601px;height:1262px;background:#e6e6e6;filter:blur(52px)"></div>
<span class="t mi" id="w0" style="top:9.6px">Arrange</span>
<svg class="chev" style="left:541.4px;top:17.6px" width="11" height="17" viewBox="0 0 11 17"><path d="M1.5 1.5 L8.8 8 L1.5 14.7"/></svg>
<span class="t mi" id="w1" style="top:50.3px">Workspace</span>
<svg class="chev" style="left:541.4px;top:59.2px" width="11" height="17" viewBox="0 0 11 17"><path d="M1.5 1.5 L8.8 8 L1.5 14.7"/></svg>
<div class="a msep" style="top:97.3px"></div>
<span class="t mi" id="w2" style="top:115.5px">3D</span>
<span class="t mi" id="w3" style="top:156.1px">Actions</span>
<span class="t mi" id="w4" style="top:196.6px">Adjustments</span>
<span class="t mi" id="w5" style="top:237.2px">Brush Settings</span>
<span class="t mi" id="w6" style="top:277.7px">Brushes</span>
<span class="t mi" id="w7" style="top:318.2px">Channels</span>
<span class="t mi" id="w8" style="top:358.8px">Character</span>
<span class="t mi" id="w9" style="top:399.3px">Character Styles</span>
<span class="t mi" id="w10" style="top:439.9px">Clone Source</span>
<span class="t mi" id="w11" style="top:480.4px">Color</span>
<span class="t mi" id="w12" style="top:520.9px">Comments</span>
<span class="t mi" id="w13" style="top:561.5px">Content Credentials (Beta)</span>
<span class="t mi" id="w14" style="top:602.0px">Glyphs</span>
<span class="t mi" id="w15" style="top:642.6px">Gradients</span>
<span class="t mi" id="w16" style="top:683.1px">Histogram</span>
<span class="t mi" id="w17" style="top:723.6px">History</span>
<span class="t mi" id="w18" style="top:764.2px">Info</span>
<span class="t mi" id="w19" style="top:804.7px">Layer Comps</span>
<svg class="ck" style="left:19px;top:848.1px" width="22" height="22" viewBox="0 0 22 22"><path d="M1.5 12.1 L8.5 20 L19.8 2.8"/></svg><span class="t mi" id="w20" style="top:845.3px">Layers</span>
<span class="t mi" id="w21" style="top:885.8px">Libraries</span>
<span class="t mi" id="w22" style="top:926.3px">Materials</span>
<span class="t mi" id="w23" style="top:966.9px">Measurement Log</span>
<span class="t mi" id="w24" style="top:1007.4px">Navigator</span>
<span class="t mi" id="w25" style="top:1048.0px">Notes</span>
<span class="t mi" id="w26" style="top:1088.5px">Paragraph</span>
<span class="t mi" id="w27" style="top:1129.0px">Paragraph Styles</span>
<span class="t mi" id="w28" style="top:1169.6px">Paths</span>
<span class="t mi" id="w29" style="top:1210.1px">Patterns</span>
<svg class="ck" style="left:19px;top:1253.5px" width="22" height="22" viewBox="0 0 22 22"><path d="M1.5 12.1 L8.5 20 L19.8 2.8"/></svg><span class="t mi" id="w30" style="top:1250.7px">Properties</span>
<span class="t mi" id="w31" style="top:1291.2px">Shapes</span>
<span class="t mi" id="w32" style="top:1331.7px">Styles</span>
<svg class="ck" style="left:19px;top:1375.1px" width="22" height="22" viewBox="0 0 22 22"><path d="M1.5 12.1 L8.5 20 L19.8 2.8"/></svg><span class="t mi" id="w33" style="top:1372.3px">Swatches</span>
<span class="t mi" id="w34" style="top:1412.8px">Timeline</span>
<span class="t mi" id="w35" style="top:1453.4px">Tool Presets</span>
<span class="t mi" id="w36" style="top:1493.9px">Version History</span>
<div class="a msep" style="top:1540.5px"></div>
<svg class="ck" style="left:19px;top:1561.9px" width="22" height="22" viewBox="0 0 22 22"><path d="M1.5 12.1 L8.5 20 L19.8 2.8"/></svg><span class="t mi" id="w37" style="top:1559.1px">Application Frame</span>
<svg class="ck" style="left:19px;top:1602.5px" width="22" height="22" viewBox="0 0 22 22"><path d="M1.5 12.1 L8.5 20 L19.8 2.8"/></svg><span class="t mi" id="w38" style="top:1599.6px">Options</span>
<svg class="ck" style="left:19px;top:1643.0px" width="22" height="22" viewBox="0 0 22 22"><path d="M1.5 12.1 L8.5 20 L19.8 2.8"/></svg><span class="t mi" id="w39" style="top:1640.2px">Tools</span>
<svg class="ck" style="left:19px;top:1683.6px" width="22" height="22" viewBox="0 0 22 22"><path d="M1.5 12.1 L8.5 20 L19.8 2.8"/></svg><span class="t mi" id="w40" style="top:1680.7px">Contextual Task Bar</span>
<div class="a msep" style="top:1727.5px"></div>
<svg class="ck" style="left:19px;top:1749.0px" width="22" height="22" viewBox="0 0 22 22"><path d="M1.5 12.1 L8.5 20 L19.8 2.8"/></svg><span class="t mi" id="w41" style="top:1746.1px">Untitled-1</span>
<span class="t" id="optk" style="left:477.5px;top:151.3px;font-size:30px;color:#1c1c1c;transform:scale(.75,1.14);transform-origin:0 0;-webkit-text-stroke:.6px">⌥</span>
</div>
<!--MENU-->
</div>
</body>
</html>
